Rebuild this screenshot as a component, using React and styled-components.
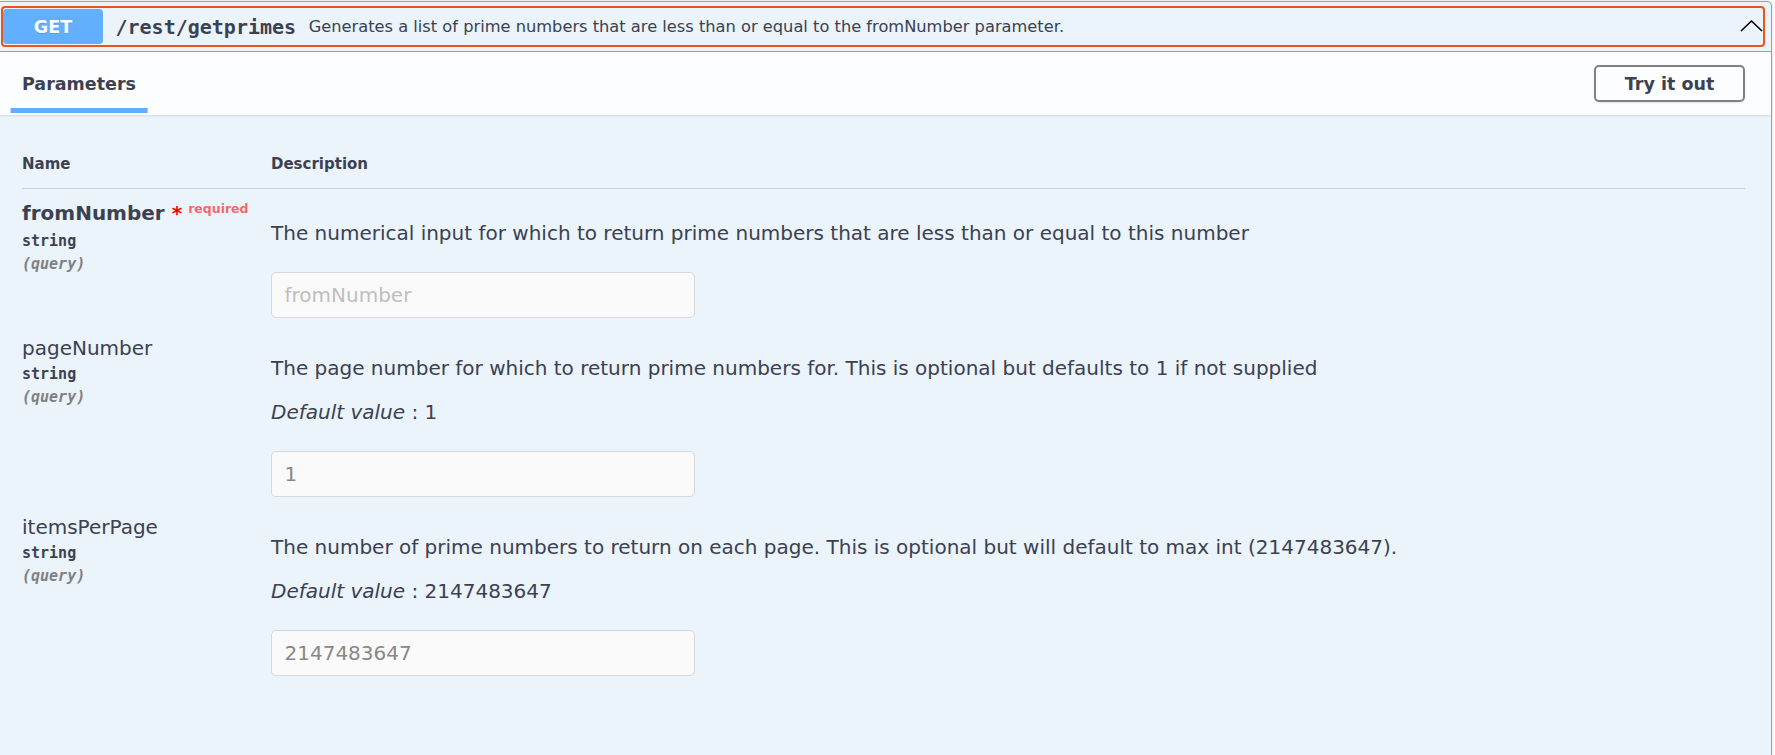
import React from "react";
import styled, { createGlobalStyle } from "styled-components";

const GlobalStyle = createGlobalStyle`
    html, body {
        margin: 0;
        padding: 0;
        background: #fff;
        overflow: hidden;
    }
    body {
        font-family: "DejaVu Sans", sans-serif;
        color: #3b4151;
    }
`;

const Block = styled.div`
    margin: 1px 3px 0 -4px;
    border: 1px solid #61affe;
    border-radius: 5px;
    background: #ebf3fb;
    box-shadow: 0 0 3px rgba(0, 0, 0, 0.19);
`;

const Summary = styled.div`
    padding: 6px 8px 6px 6px;
    border-bottom: 1px solid #61affe;
`;

const SummaryControl = styled.div`
    display: flex;
    align-items: center;
    height: 37px;
    border-radius: 2px;
    outline: 2px solid #e9541f;
`;

const Method = styled.span`
    min-width: 100px;
    padding: 7.5px 0;
    border-radius: 4px;
    background: #61affe;
    color: #fff;
    font-size: 17.5px;
    font-weight: 700;
    text-align: center;
    text-shadow: 0 1px 0 rgba(0, 0, 0, 0.1);
`;

const Path = styled.span`
    padding: 0 12.5px;
    font-family: "DejaVu Sans Mono", monospace;
    font-size: 20px;
    font-weight: 700;
    color: #3b4151;
`;

const SummaryText = styled.span`
    flex: 1 1 auto;
    font-size: 16.25px;
    color: #3b4151;
`;

const Arrow = styled.svg`
    flex: none;
    width: 25px;
    height: 25px;
    margin-top: -2px;
`;

const SectionHeader = styled.div`
    display: flex;
    align-items: center;
    justify-content: space-between;
    min-height: 63px;
    padding: 0 26px 0 25px;
    background: rgba(255, 255, 255, 0.8);
    box-shadow: 0 1px 2px rgba(0, 0, 0, 0.1);
`;

const TabTitle = styled.h4`
    margin: 0;
    font-size: 17.5px;
    font-weight: 700;
    color: #3b4151;

    span {
        position: relative;
    }
    span::after {
        content: "";
        position: absolute;
        left: 50%;
        bottom: -19px;
        width: 120%;
        height: 5px;
        transform: translateX(-50%);
        background: #61affe;
    }
`;

const TryButton = styled.button`
    padding: 6.25px 28.75px;
    border: 2px solid #808080;
    border-radius: 5px;
    background: transparent;
    box-shadow: 0 1px 2px rgba(0, 0, 0, 0.1);
    font-family: "DejaVu Sans", sans-serif;
    font-size: 17.5px;
    font-weight: 700;
    line-height: 20px;
    color: #3b4151;
`;

const TableContainer = styled.div`
    padding: 24px 26px 120px 25px;
`;

const HeadRow = styled.div`
    display: grid;
    grid-template-columns: 249px 1fr;
    border-bottom: 1px solid rgba(59, 65, 81, 0.2);
`;

const HeadCell = styled.div`
    padding: 17px 0 15px;
    font-size: 15px;
    line-height: 17px;
    font-weight: 700;
    color: #3b4151;
`;

const ParamRow = styled.div`
    display: grid;
    grid-template-columns: 249px 1fr;
    padding: 13px 0 6px;
`;

const NameCol = styled.div`
    display: flex;
    flex-direction: column;
`;

const ParamName = styled.div`
    font-size: 20px;
    line-height: 23px;
    font-weight: ${(p) => (p.$required ? 700 : 400)};
    color: #3b4151;
    white-space: nowrap;
`;

const Star = styled.span`
    color: red;
`;

const Required = styled.span`
    position: relative;
    top: -7px;
    padding-left: 6px;
    font-size: 12.5px;
    font-weight: 700;
    color: rgba(255, 0, 0, 0.6);
`;

const ParamType = styled.div`
    padding: 6px 0;
    font-family: "DejaVu Sans Mono", monospace;
    font-size: 15px;
    line-height: 17px;
    font-weight: 700;
    color: #3b4151;
`;

const ParamIn = styled.div`
    font-family: "DejaVu Sans Mono", monospace;
    font-size: 15px;
    line-height: 17px;
    font-weight: 700;
    font-style: italic;
    color: #808080;
`;

const DescCol = styled.div`
    display: flex;
    flex-direction: column;
    align-items: flex-start;
    padding-top: 18px;
`;

const Desc = styled.p`
    margin: 0;
    font-size: 20px;
    line-height: 26px;
    color: #3b4151;

    & + & {
        margin-top: 18px;
    }
    i {
        font-style: italic;
    }
`;

const Input = styled.input`
    box-sizing: border-box;
    width: 424px;
    height: 46px;
    margin: 26px 0 0;
    padding: 0 12.5px;
    border: 1px solid #d9d9d9;
    border-radius: 5px;
    background: #fafafa;
    font-family: "DejaVu Sans", sans-serif;
    font-size: 20px;
    color: #888;
    outline: none;

    &::placeholder {
        color: #bfbfbf;
    }
`;

const params = [
    {
        name: "fromNumber",
        required: true,
        type: "string",
        in: "query",
        desc: "The numerical input for which to return prime numbers that are less than or equal to this number",
        placeholder: "fromNumber",
    },
    {
        name: "pageNumber",
        type: "string",
        in: "query",
        desc: "The page number for which to return prime numbers for. This is optional but defaults to 1 if not supplied",
        def: "1",
    },
    {
        name: "itemsPerPage",
        type: "string",
        in: "query",
        desc: "The number of prime numbers to return on each page. This is optional but will default to max int (2147483647).",
        def: "2147483647",
    },
];

const App = () => {
    return (
        <>
            <GlobalStyle />
            <Block>
                <Summary>
                    <SummaryControl>
                        <Method>GET</Method>
                        <Path>/rest/getprimes</Path>
                        <SummaryText>
                            Generates a list of prime numbers that are less than or equal to the fromNumber parameter.
                        </SummaryText>
                        <Arrow viewBox="0 0 25 25" aria-hidden="true">
                            <polyline
                                points="3,18 13.5,8 24,18"
                                fill="none"
                                stroke="#000"
                                strokeWidth="1.6"
                            />
                        </Arrow>
                    </SummaryControl>
                </Summary>
                <SectionHeader>
                    <TabTitle>
                        <span>Parameters</span>
                    </TabTitle>
                    <TryButton>Try it out</TryButton>
                </SectionHeader>
                <TableContainer>
                    <HeadRow>
                        <HeadCell>Name</HeadCell>
                        <HeadCell>Description</HeadCell>
                    </HeadRow>
                    {params.map((p) => (
                        <ParamRow key={p.name}>
                            <NameCol>
                                <ParamName $required={p.required}>
                                    {p.name}
                                    {p.required && (
                                        <>
                                            <Star>&nbsp;*</Star>
                                            <Required>required</Required>
                                        </>
                                    )}
                                </ParamName>
                                <ParamType>{p.type}</ParamType>
                                <ParamIn>({p.in})</ParamIn>
                            </NameCol>
                            <DescCol>
                                <Desc>{p.desc}</Desc>
                                {p.def !== undefined && (
                                    <Desc>
                                        <i>Default value</i> : {p.def}
                                    </Desc>
                                )}
                                <Input
                                    readOnly
                                    placeholder={p.placeholder}
                                    value={p.def || ""}
                                />
                            </DescCol>
                        </ParamRow>
                    ))}
                </TableContainer>
            </Block>
        </>
    );
};

export default App;
